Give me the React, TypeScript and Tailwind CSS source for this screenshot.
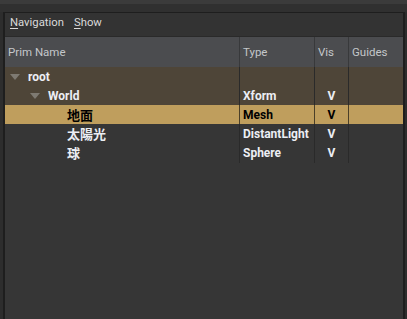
import React from 'react';

type Row = {
  name: string;
  type: string;
  vis: string;
  depth: number;
  expanded?: boolean;
  kind: 'parent' | 'selected' | 'plain';
};

const rows: Row[] = [
  { name: 'root', type: '', vis: '', depth: 0, expanded: true, kind: 'parent' },
  { name: 'World', type: 'Xform', vis: 'V', depth: 1, expanded: true, kind: 'parent' },
  { name: '地面', type: 'Mesh', vis: 'V', depth: 2, kind: 'selected' },
  { name: '太陽光', type: 'DistantLight', vis: 'V', depth: 2, kind: 'plain' },
  { name: '球', type: 'Sphere', vis: 'V', depth: 2, kind: 'plain' },
];

const indent = ['pl-[5px]', 'pl-[25px]', 'pl-[62px]'];

const Caret = () => (
  <svg width="10" height="6" viewBox="0 0 10 6" className="mr-[8px] shrink-0">
    <path d="M0 0 H10 L5 6 Z" fill="#7e7a72" />
  </svg>
);

export default function App() {
  return (
    <div className="w-[407px] h-[319px] bg-[#2d2d2d] flex flex-col overflow-hidden font-['Roboto',sans-serif] text-[12px]">
      {/* window strip */}
      <div className="h-[4px] bg-[#3b3b3b] shrink-0" />
      <div className="h-[8px] bg-[#303030] shrink-0" />

      <div className="flex-1 flex flex-col ml-[3px] mr-[2px] border-2 border-t border-b-0 border-[#1e1e1e] bg-[#363636] min-h-0">
        {/* menu bar */}
        <div className="h-[23px] bg-[#333333] flex items-start pt-[2px] leading-[16px] gap-[10px] px-[5px] text-[11.3px] text-[#dadada] shrink-0">
          <span>
            <span className="underline underline-offset-2">N</span>avigation
          </span>
          <span>
            <span className="underline underline-offset-2">S</span>how
          </span>
        </div>

        {/* header */}
        <div className="h-[31px] bg-[#4b4c4f] border-t border-[#2a2a2a] grid grid-cols-[235px_75px_34px_1fr] text-[11.5px] text-[#c4c7ca] shrink-0">
          <div className="flex items-center pt-[1px] pl-[3px] border-r border-[#38393b]">Prim Name</div>
          <div className="flex items-center pt-[1px] pl-[3px] border-r border-[#38393b]">Type</div>
          <div className="flex items-center pt-[1px] pl-[3px] border-r border-[#38393b]">Vis</div>
          <div className="flex items-center pt-[1px] pl-[3px]">Guides</div>
        </div>

        {/* tree rows */}
        <div className="flex flex-col">
          {rows.map((r) => {
            const bg =
              r.kind === 'parent' ? 'bg-[#4e4538]' : r.kind === 'selected' ? 'bg-[#bf9e5d]' : 'bg-[#363636]';
            const text = r.kind === 'selected' ? 'text-black' : 'text-[#eceef4]';
            const line = r.kind === 'selected' ? 'border-[#4a3f28]' : 'border-[#2a2a2a]';
            return (
              <div key={r.name} className={`h-[19px] grid grid-cols-[235px_75px_34px_1fr] font-bold ${bg} ${text}`}>
                <div className={`flex items-center border-r ${line} ${indent[r.depth]}`}>
                  {r.expanded && <Caret />}
                  <span className={r.depth === 2 ? "font-['Noto_Sans_CJK_JP',sans-serif] text-[13px]" : ''}>
                    {r.name}
                  </span>
                </div>
                <div className={`flex items-center pl-[3px] border-r ${line}`}>{r.type}</div>
                <div className={`flex items-center justify-center border-r ${line}`}>{r.vis}</div>
                <div />
              </div>
            );
          })}
        </div>
      </div>
    </div>
  );
}
